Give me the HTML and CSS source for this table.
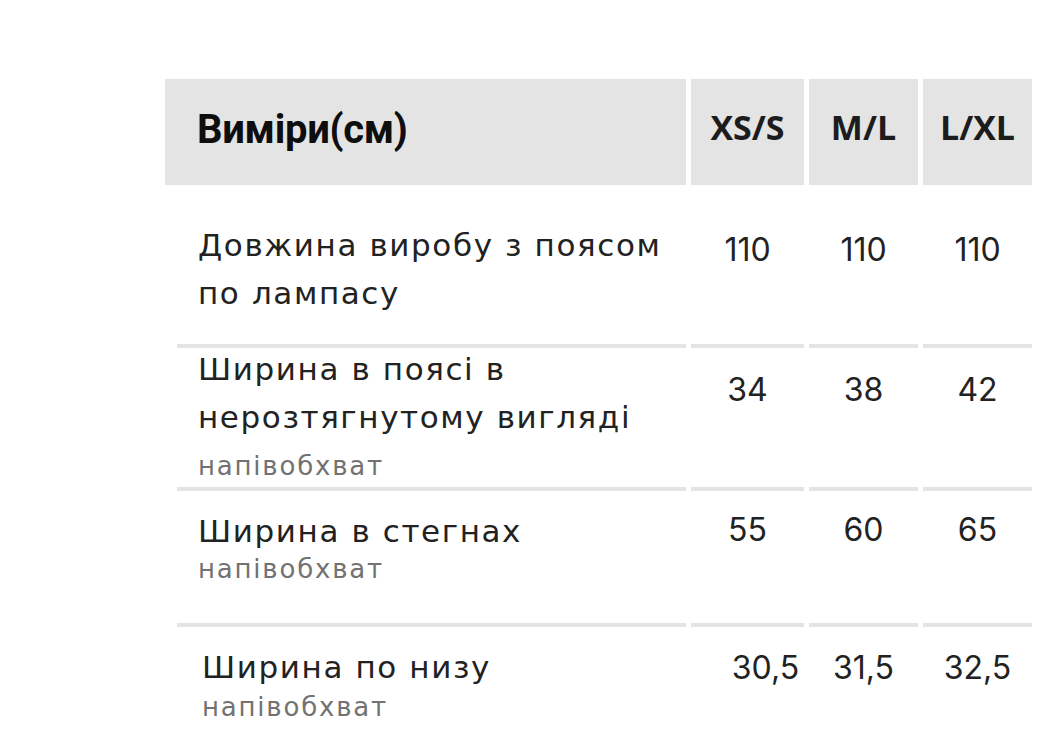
FILE: index.html
```html
<!DOCTYPE html>
<html lang="uk">
<head>
<meta charset="utf-8">
<title>Виміри</title>
<link rel="stylesheet" href="styles.css">
</head>
<body>
<div class="size-table">
  <div class="row head">
    <div class="cell label-cell"><span class="title">Виміри(см)</span></div>
    <div class="cell size">XS/S</div>
    <div class="cell size">M/L</div>
    <div class="cell size">L/XL</div>
  </div>

  <div class="row r1">
    <div class="cell label-cell"><div class="label"><div class="name">Довжина виробу з поясом<br>по лампасу</div></div></div>
    <div class="cell val">110</div>
    <div class="cell val">110</div>
    <div class="cell val">110</div>
  </div>

  <div class="row r2">
    <div class="cell label-cell"><div class="label"><div class="name">Ширина в поясі в<br>нерозтягнутому вигляді</div><div class="note">напівобхват</div></div></div>
    <div class="cell val">34</div>
    <div class="cell val">38</div>
    <div class="cell val">42</div>
  </div>

  <div class="row r3">
    <div class="cell label-cell"><div class="label"><div class="name">Ширина в стегнах</div><div class="note">напівобхват</div></div></div>
    <div class="cell val">55</div>
    <div class="cell val">60</div>
    <div class="cell val">65</div>
  </div>

  <div class="row r4">
    <div class="cell label-cell"><div class="label"><div class="name">Ширина по низу</div><div class="note">напівобхват</div></div></div>
    <div class="cell val shift">30,5</div>
    <div class="cell val">31,5</div>
    <div class="cell val">32,5</div>
  </div>
</div>
</body>
</html>
```

FILE: styles.css
```css
html, body {
  margin: 0;
  padding: 0;
  background: #ffffff;
}

body {
  font-family: "Inter", "Noto Sans", sans-serif;
  color: #222222;
  overflow: hidden;
}

.size-table {
  margin: 79px 0 0 165px;
  width: 867px;
}

.row {
  display: grid;
  grid-template-columns: 521px 113px 109px 109px;
  column-gap: 5px;
}

/* header */
.head {
  height: 106px;
}

.head .cell {
  background: #e4e4e4;
  display: flex;
  align-items: center;
  font-family: "Open Sans", "Noto Sans", sans-serif;
  font-weight: 700;
  color: #111111;
}

.head .label-cell {
  padding-left: 32px;
  padding-bottom: 6px;
}

.title {
  font-family: "Roboto", "Open Sans", sans-serif;
  font-size: 40px;
  letter-spacing: -0.3px;
  color: #0e0e0e;
}

.head .size {
  justify-content: center;
  font-size: 34px;
  padding-bottom: 10px;
  letter-spacing: 0;
  color: #1c1c1c;
}

/* body rows */
.r1 .cell, .r2 .cell, .r3 .cell, .r4 .cell {
  box-sizing: border-box;
  border-bottom: 4px solid #e4e4e4;
}

.r4 .cell {
  border-bottom: none;
}

.label-cell {
  box-sizing: border-box;
}

.r1 .label-cell, .r2 .label-cell, .r3 .label-cell, .r4 .label-cell {
  margin-left: 12px;
  padding-left: 21px;
}

.name {
  font-family: "DejaVu Sans", "Inter", sans-serif;
  font-size: 31px;
  line-height: 48px;
  letter-spacing: 1.6px;
  color: #222222;
}

.note {
  font-family: "DejaVu Sans", "Inter", sans-serif;
  font-size: 26px;
  line-height: 32px;
  letter-spacing: 1.8px;
  color: #727272;
}

.val {
  text-align: center;
  font-size: 32px;
  line-height: 48px;
  letter-spacing: 0;
  color: #222222;
}

.shift {
  padding-left: 36px;
}

.r1 { height: 163px; }
.r1 .label-cell { padding-top: 36px; }
.r1 .val { padding-top: 41px; }

.r2 { height: 143px; }
.r2 .label { margin-top: -3px; }
.r2 .note { margin-top: 9px; }
.r2 .val { padding-top: 18px; }

.r3 { height: 136px; }
.r3 .label-cell { padding-top: 16px; }
.r3 .note { margin-top: -2px; }
.r3 .val { padding-top: 15px; }

.r4 { height: 110px; }
.r4 .label-cell { padding-top: 16px; padding-left: 25px; }
.r4 .val { padding-top: 17px; }
```
